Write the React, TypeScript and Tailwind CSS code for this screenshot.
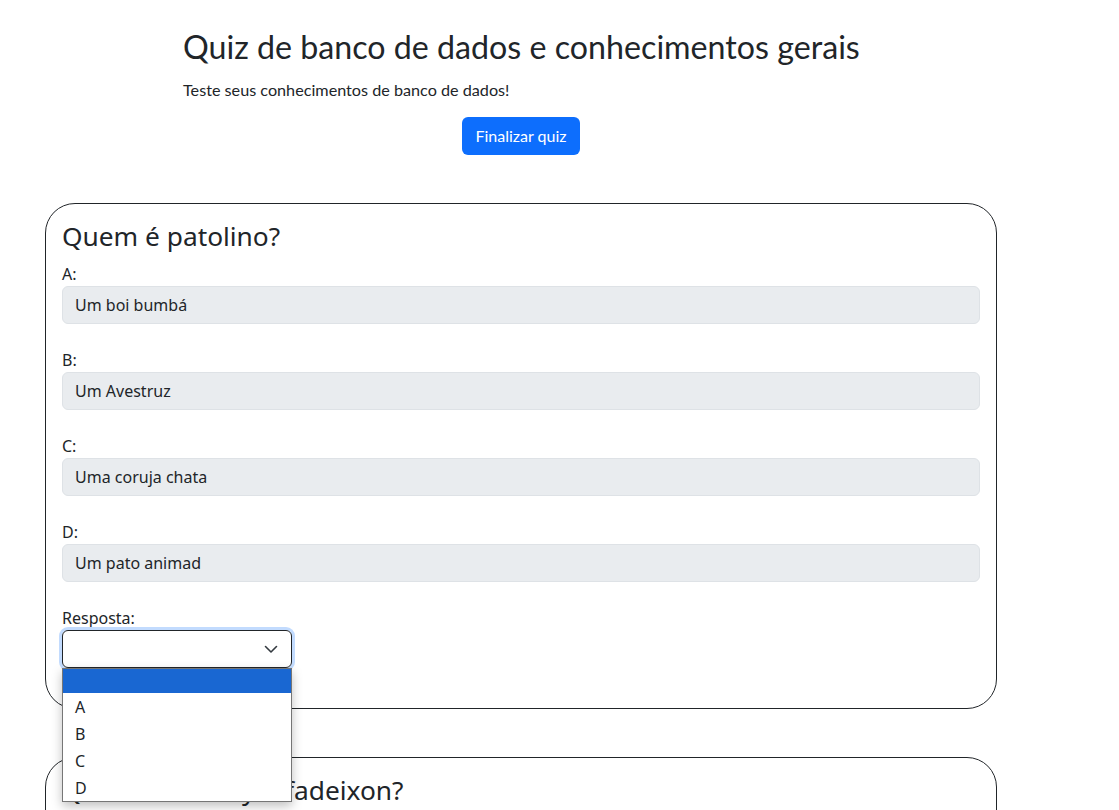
const options = [
  { label: "A:", value: "Um boi bumbá" },
  { label: "B:", value: "Um Avestruz" },
  { label: "C:", value: "Uma coruja chata" },
  { label: "D:", value: "Um pato animad" },
];

const App = () => {
  return (
    <div className="min-h-[810px] bg-white text-[#212529] font-['Noto_Sans',sans-serif] overflow-hidden">
      <div className="w-[952px] ml-[45px]">
        {/* Header */}
        <div className="pt-[28px] pl-[138px] font-['Lato',sans-serif]">
          <h2 className="text-[32.2px] leading-[38px]">
            Quiz de banco de dados e conhecimentos gerais
          </h2>
          <p className="text-[16.2px] leading-6 mt-[12px]">
            Teste seus conhecimentos de banco de dados!
          </p>
        </div>
        <div className="flex justify-center mt-[15px] font-['Lato',sans-serif]">
          <button className="h-[38px] px-[13px] rounded-md bg-[#0d6efd] text-white text-base">
            Finalizar quiz
          </button>
        </div>

        {/* Question 1 */}
        <div className="relative mt-[48px] border border-[#212529] rounded-[30px] px-4 pt-4 pb-[16px]">
          <h3 className="text-[26.3px] leading-[33px] mb-[9px]">Quem é patolino?</h3>
          {options.map((o) => (
            <div key={o.label} className="mb-6">
              <div className="text-base leading-6">{o.label}</div>
              <div className="h-[38px] flex items-center px-3 rounded-md border border-[#dee2e6] bg-[#e9ecef] text-base">
                {o.value}
              </div>
            </div>
          ))}
          <div className="mb-6">
            <div className="text-base leading-6">Resposta:</div>
            <div className="relative w-[230px]">
              <div className="h-[38px] flex items-center justify-end pr-[12px] rounded-md border border-[#212529] ring-[3px] ring-[#c2dbfe]">
                <svg width="16" height="16" viewBox="0 0 16 16" fill="none">
                  <path
                    d="m2.5 5.5 5.5 5.5 5.5-5.5"
                    stroke="#343a40"
                    strokeWidth="1.6"
                    strokeLinecap="round"
                    strokeLinejoin="round"
                  />
                </svg>
              </div>
              {/* Open dropdown */}
              <div className="absolute left-0 top-[38px] w-[230px] bg-white border border-[#767676] shadow-[0_4px_10px_rgba(0,0,0,0.25)] z-10 text-base">
                <div className="h-[24px] bg-[#1967d2]" />
                {["A", "B", "C", "D"].map((l) => (
                  <div key={l} className="h-[27px] flex items-center pl-3">
                    {l}
                  </div>
                ))}
              </div>
            </div>
          </div>
        </div>

        {/* Question 2 */}
        <div className="mt-[48px] border border-[#212529] rounded-[30px] px-4 pt-4 h-[300px]">
          <h3 className="text-[26.3px] leading-[33px]">Quem é o Perry o fadeixon?</h3>
        </div>
      </div>
    </div>
  );
};

export default App;
